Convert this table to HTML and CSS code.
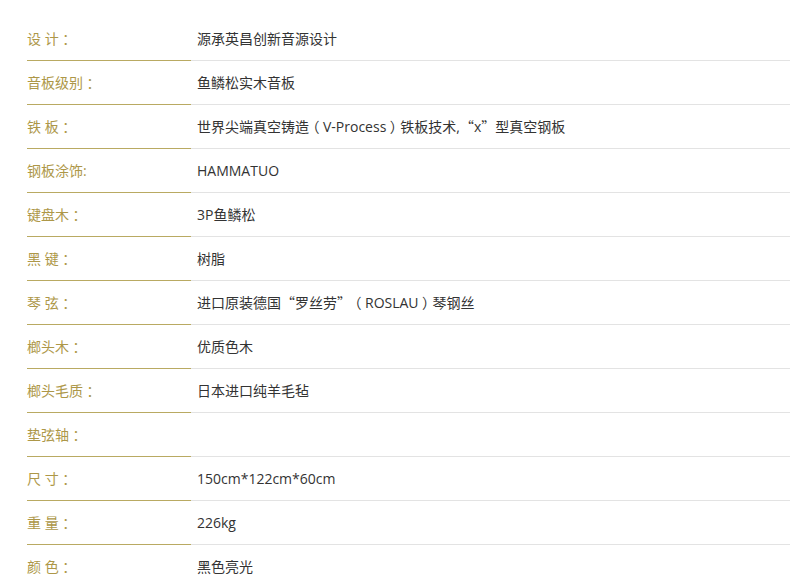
FILE: index.html
```html
<!DOCTYPE html>
<html lang="zh-CN">
<head>
<meta charset="utf-8">
<title>参数</title>
<link rel="stylesheet" href="styles.css">
</head>
<body>
<div class="specs">
  <table class="spec-table">
    <tbody>
      <tr><th>设 计<span class="fw">：</span></th><td>源承英昌创新音源设计</td></tr>
      <tr><th>音板级别<span class="fw">：</span></th><td>鱼鳞松实木音板</td></tr>
      <tr><th>铁 板<span class="fw">：</span></th><td>世界尖端真空铸造<span class="fw">（</span>V-Process<span class="fw">）</span>铁板技术,<span class="cjk">“</span>x<span class="cjk">”</span>型真空钢板</td></tr>
      <tr><th>钢板涂饰:</th><td>HAMMATUO</td></tr>
      <tr><th>键盘木<span class="fw">：</span></th><td>3P鱼鳞松</td></tr>
      <tr><th>黑 键<span class="fw">：</span></th><td>树脂</td></tr>
      <tr><th>琴 弦<span class="fw">：</span></th><td>进口原装德国<span class="cjk">“</span>罗丝劳<span class="cjk">”</span><span class="fw">（</span>ROSLAU<span class="fw">）</span>琴钢丝</td></tr>
      <tr><th>榔头木<span class="fw">：</span></th><td>优质色木</td></tr>
      <tr><th>榔头毛质<span class="fw">：</span></th><td>日本进口纯羊毛毡</td></tr>
      <tr><th>垫弦轴<span class="fw">：</span></th><td></td></tr>
      <tr><th>尺 寸<span class="fw">：</span></th><td>150cm*122cm*60cm</td></tr>
      <tr><th>重 量<span class="fw">：</span></th><td>226kg</td></tr>
      <tr><th>颜 色<span class="fw">：</span></th><td>黑色亮光</td></tr>
    </tbody>
  </table>
</div>
</body>
</html>
```
FILE: styles.css
```css
html, body {
  margin: 0;
  padding: 0;
  background: #ffffff;
}
.specs {
  padding: 17px 0 0 27px;
  font-family: "Open Sans", "Noto Sans CJK SC", sans-serif;
  font-size: 14px;
}
.spec-table {
  width: 763px;
  border-collapse: collapse;
  border-spacing: 0;
}
.spec-table th,
.spec-table td {
  height: 43px;
  padding: 0;
  line-height: 20px;
  vertical-align: middle;
  text-align: left;
  font-weight: normal;
  white-space: pre;
}
.spec-table th {
  width: 164px;
  color: #ad9748;
  border-bottom: 1px solid #b9aa62;
}
.spec-table td {
  padding-left: 6px;
  color: #333333;
  border-bottom: 1px solid #e3e3e3;
}
.fw {
  display: inline-block;
  width: 1em;
  text-align: center;
  font-family: "Noto Sans CJK SC", sans-serif;
  font-feature-settings: "halt";
}
.cjk {
  font-family: "Noto Sans CJK SC", sans-serif;
  font-feature-settings: "fwid";
}
```
